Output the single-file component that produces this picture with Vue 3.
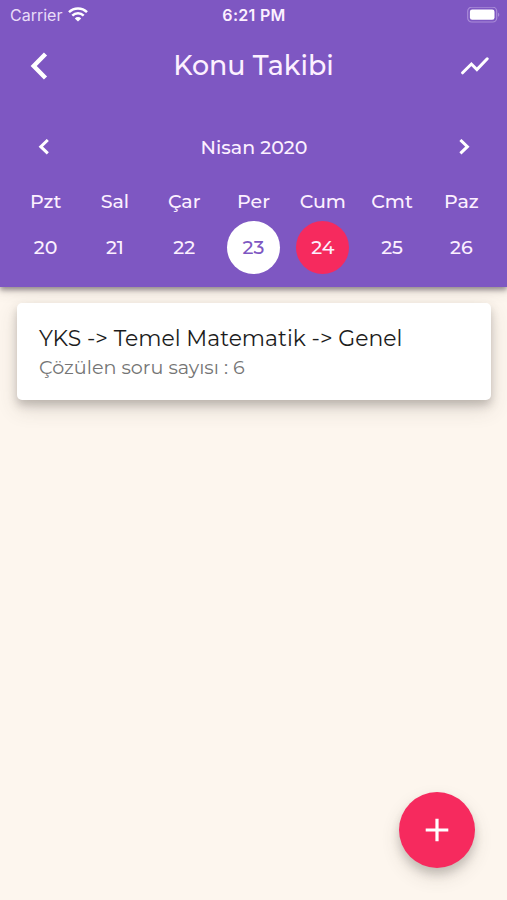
<script setup>
const days = [
  { name: 'Pzt', date: 20 },
  { name: 'Sal', date: 21 },
  { name: 'Çar', date: 22 },
  { name: 'Per', date: 23, state: 'today' },
  { name: 'Cum', date: 24, state: 'selected' },
  { name: 'Cmt', date: 25 },
  { name: 'Paz', date: 26 },
]
</script>

<template>
  <div class="screen">
    <header class="header">
      <div class="status">
        <div class="carrier">
          <span>Carrier</span>
          <svg width="20" height="15" viewBox="0 0 20 15" fill="none" stroke="#fff" stroke-width="2.5">
            <path d="M1 5.2a12.8 12.8 0 0 1 18 0" />
            <path d="M4.3 8.7a8.1 8.1 0 0 1 11.4 0" />
            <path d="M10 14.6l-3.2-3.2a4.6 4.6 0 0 1 6.4 0z" fill="#fff" stroke="none" />
          </svg>
        </div>
        <span class="time">6:21 PM</span>
        <svg class="battery" width="33" height="16" viewBox="0 0 33 16">
          <rect x="0.7" y="0.2" width="29" height="14.8" rx="4" fill="none" stroke="#a98bd8" stroke-width="1.2" />
          <rect x="2.9" y="2.4" width="24.6" height="10.4" rx="2.3" fill="#fff" />
          <path d="M31 5.4c1.8.7 1.8 3.7 0 4.4z" fill="#a98bd8" />
        </svg>
      </div>

      <div class="appbar">
        <svg width="18" height="28" viewBox="0 0 18 28" fill="none" stroke="#fff" stroke-width="4.4">
          <path d="M15.5 2L3.7 14l11.8 12" />
        </svg>
        <h1 class="title">Konu Takibi</h1>
        <svg width="28" height="18" viewBox="0 0 28 18" fill="none" stroke="#fff" stroke-width="3">
          <path d="M1.6 15.8l8.8-8.8 5.5 5.5L26.2 1.8" stroke-linejoin="miter" stroke-linecap="round" />
        </svg>
      </div>

      <div class="month">
        <svg width="11" height="16" viewBox="0 0 11 16" fill="none" stroke="#fff" stroke-width="3">
          <path d="M9.8 1L2.8 7.7l7 6.7" />
        </svg>
        <span class="month-name">Nisan 2020</span>
        <svg width="11" height="16" viewBox="0 0 11 16" fill="none" stroke="#fff" stroke-width="3">
          <path d="M1.4 1l7 6.7-7 6.7" />
        </svg>
      </div>

      <div class="week">
        <div v-for="day in days" :key="day.date" class="day">
          <span class="day-name">{{ day.name }}</span>
          <span class="date" :class="day.state">{{ day.date }}</span>
        </div>
      </div>
    </header>

    <main class="content">
      <article class="card">
        <div class="card-title">YKS -&gt; Temel Matematik -&gt; Genel</div>
        <div class="card-sub">Çözülen soru sayısı : 6</div>
      </article>
    </main>

    <button class="fab" aria-label="Ekle">
      <svg width="24" height="24" viewBox="0 0 24 24" stroke="#fff" stroke-width="3.2">
        <path d="M12 0.7v22.6M0.7 12h22.6" />
      </svg>
    </button>
  </div>
</template>

<style>
body {
  margin: 0;
}
</style>

<style scoped>
.screen {
  position: relative;
  width: 507px;
  height: 900px;
  overflow: hidden;
  background: #fdf6ee;
  font-family: Montserrat, Inter, sans-serif;
  font-weight: 500;
}
.header {
  box-sizing: border-box;
  height: 287px;
  background: #7e57c2;
  color: #fcf0ff;
  box-shadow: 0 3px 5px rgba(60, 50, 60, 0.5), 0 5px 12px rgba(90, 80, 70, 0.12);
}
.status {
  display: grid;
  grid-template-columns: 1fr auto 1fr;
  align-items: center;
  height: 28px;
  padding: 1px 7px 0 10px;
  box-sizing: border-box;
  font-family: Inter, sans-serif;
  font-size: 16px;
}
.carrier {
  display: flex;
  align-items: center;
  gap: 6px;
  font-weight: 400;
  color: #e9dcf8;
}
.time {
  margin-right: 2px;
  font-weight: 600;
  letter-spacing: 0.3px;
}
.battery {
  justify-self: end;
}
.appbar {
  display: flex;
  align-items: center;
  justify-content: space-between;
  height: 76px;
  padding: 0 18px 0 30px;
}
.title {
  margin: -2px 2px 0 0;
  font-size: 26.9px;
  font-weight: 500;
}
.month {
  display: flex;
  align-items: center;
  justify-content: space-between;
  height: 84px;
  padding: 1px 37px 0 38px;
  box-sizing: border-box;
}
.month-name {
  padding-top: 1px;
  font-size: 19px;
}
.week {
  display: grid;
  grid-template-columns: repeat(7, 1fr);
  padding: 0 11px;
}
.day {
  display: flex;
  flex-direction: column;
  align-items: center;
}
.day-name {
  height: 33px;
  line-height: 28px;
  font-size: 19px;
}
.date {
  width: 53px;
  height: 53px;
  line-height: 53px;
  border-radius: 50%;
  text-align: center;
  font-size: 19px;
}
.today {
  background: #fff;
  color: #7e57c2;
}
.selected {
  background: #f62a5e;
}
.content {
  padding: 16px 16px 0 17px;
}
.card {
  box-sizing: border-box;
  height: 97px;
  padding: 21px 22px;
  border-radius: 5px;
  background: #fff;
  box-shadow: 0 5px 8px rgba(70, 65, 60, 0.25), 0 9px 20px rgba(70, 65, 60, 0.17);
}
.card-title {
  line-height: 28px;
  font-size: 21.9px;
  font-weight: 400;
  color: #1c1c1c;
  white-space: nowrap;
}
.card-sub {
  line-height: 31px;
  font-size: 19.2px;
  font-weight: 400;
  color: #757575;
}
.fab {
  position: absolute;
  left: 399px;
  top: 792px;
  width: 76px;
  height: 76px;
  display: flex;
  align-items: center;
  justify-content: center;
  padding: 0;
  border: 0;
  border-radius: 50%;
  background: #f62a5e;
  box-shadow: 0 6px 8px rgba(70, 65, 60, 0.2), 0 9px 18px rgba(70, 65, 60, 0.17);
}
</style>
